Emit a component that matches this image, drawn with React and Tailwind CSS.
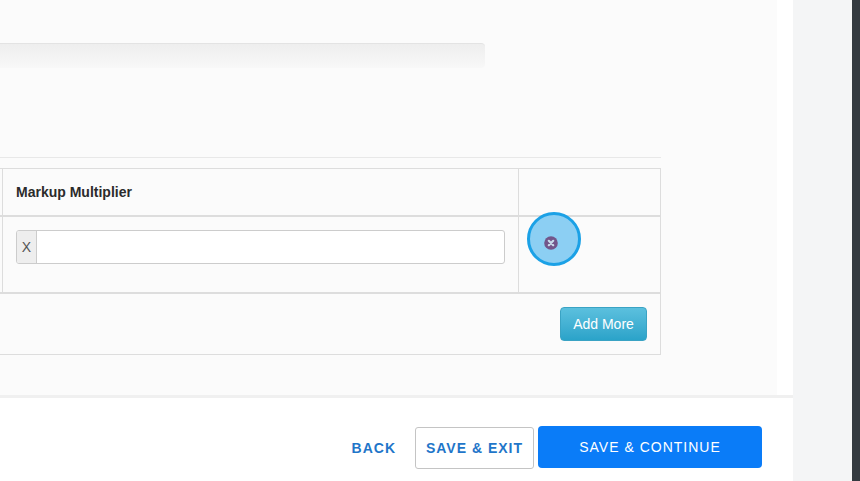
import React from 'react';

function RemoveIcon() {
    return (
        <svg width="14" height="14" viewBox="0 0 14 14" className="block">
            <circle cx="7" cy="7" r="6.8" fill="#72568a" />
            <path d="M4.8 4.8 L9.2 9.2 M9.2 4.8 L4.8 9.2" stroke="#c9dcec" strokeWidth="2.2" strokeLinecap="round" />
        </svg>
    );
}

function MarkupTable() {
    return (
        <div className="relative w-[661px] h-[187px] border border-l-0 border-[#dddddd] flex flex-col text-[#333333]">
            <div className="flex h-[48px] border-b-2 border-[#dddddd]">
                <div className="w-[3px] border-r border-[#dddddd]" />
                <div className="w-[516px] border-r border-[#dddddd] pl-[13px] pt-[15px] text-[14px] leading-[17px] font-bold text-[#2b2b2b]">
                    Markup Multiplier
                </div>
            </div>
            <div className="flex h-[77px] border-b-2 border-[#dddddd]">
                <div className="w-[3px] border-r border-[#dddddd]" />
                <div className="w-[516px] border-r border-[#dddddd] pl-[13px] pr-[13px] pt-[13px]">
                    <div className="flex h-[34px] border border-[#cccccc] rounded-[3px] bg-white overflow-hidden">
                        <div className="w-[20px] bg-[#eeeeee] border-r border-[#cccccc] flex items-center justify-center text-[14px] text-[#555555]">
                            X
                        </div>
                    </div>
                </div>
            </div>
            <div className="flex-1 flex justify-end items-start pt-[13px] pr-[13px]">
                <button className="w-[87px] h-[34px] rounded-[4px] border border-[#3aa3c4] bg-gradient-to-b from-[#5bc0de] to-[#2aa3c9] text-white text-[14px]">
                    Add More
                </button>
            </div>
            <div className="absolute left-[527px] top-[43px] w-[54px] h-[54px] rounded-full border-[3px] border-[#1ba1e6] bg-[#8ccff3] flex items-center justify-center">
                <div className="mt-[8px] -ml-[6px]">
                    <RemoveIcon />
                </div>
            </div>
        </div>
    );
}

export default function App() {
    return (
        <div className="flex h-[481px] w-[860px] overflow-hidden bg-[#f4f5f6] font-['Liberation_Sans',Arial,sans-serif]">
            <div className="w-[793px] flex flex-col bg-white">
                <div className="h-[398px] bg-white border-b-[3px] border-[#f0f0f0]">
                    <div className="w-[777px] h-full bg-[#fbfbfb] pt-[43px]">
                        <div className="w-[485px] h-[25px] rounded-r-[4px] border-t border-[#e3e3e3] bg-gradient-to-b from-[#eeeeee] to-[#f8f8f8]" />
                        <div className="w-[661px] h-px bg-[#e8e8e8] mt-[89px]" />
                        <div className="mt-[10px]">
                            <MarkupTable />
                        </div>
                    </div>
                </div>
                <div className="flex justify-end items-start pt-[28px] pr-[31px]">
                    <button className="mt-[1px] mr-[19px] h-[42px] text-[14px] font-bold tracking-[1px] text-[#1f76c9]">
                        BACK
                    </button>
                    <button className="mt-[1px] mr-[4px] w-[119px] h-[42px] rounded-[3px] border border-[#c4c4c4] bg-white text-[14px] font-bold tracking-[1px] text-[#1f76c9]">
                        SAVE &amp; EXIT
                    </button>
                    <button className="w-[224px] h-[42px] rounded-[4px] bg-[#0a7cf8] text-white text-[14px] tracking-[1px]">
                        SAVE &amp; CONTINUE
                    </button>
                </div>
            </div>
            <div className="flex-1" />
            <div className="w-[8px] bg-[#343a40]" />
        </div>
    );
}
